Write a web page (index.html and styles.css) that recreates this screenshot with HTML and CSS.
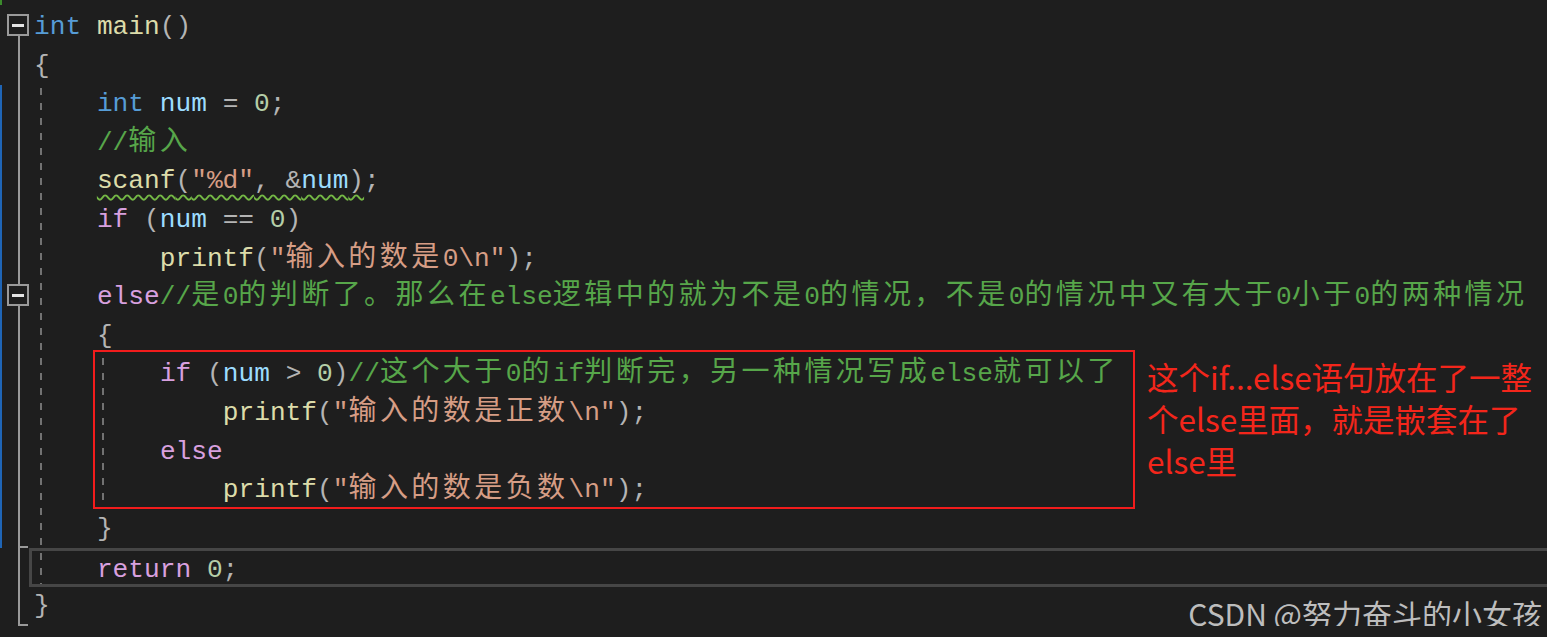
FILE: index.html
```html
<!DOCTYPE html>
<html lang="zh-CN">
<head>
<meta charset="utf-8">
<title>if else 嵌套</title>
<link rel="stylesheet" href="styles.css">
</head>
<body>
<div class="editor">
  <div class="line"><div class="gutter g-first"><div class="fold"></div></div><div class="code"><span class="k">int</span> <span class="f">main</span><span class="p">()</span></div></div>
  <div class="line"><div class="gutter g"></div><div class="code"><span class="p">{</span></div></div>
  <div class="block">
    <div class="line"><div class="gutter g-mod"></div><div class="code">    <span class="k">int</span> <span class="v">num</span> <span class="p">=</span> <span class="n">0</span><span class="p">;</span></div></div>
    <div class="line"><div class="gutter g-mod"></div><div class="code">    <span class="c">//<span class="zh">输入</span></span></div></div>
    <div class="line"><div class="gutter g-mod"></div><div class="code">    <span class="squig"><span class="f">scanf</span><span class="p">(</span><span class="s">"%d"</span><span class="p">, &amp;</span><span class="v">num</span><span class="p">)</span></span><span class="p">;</span></div></div>
    <div class="line"><div class="gutter g-mod"></div><div class="code">    <span class="ctl">if</span> <span class="p">(</span><span class="v">num</span> <span class="p">==</span> <span class="n">0</span><span class="p">)</span></div></div>
    <div class="line"><div class="gutter g-mod"></div><div class="code">        <span class="f">printf</span><span class="p">(</span><span class="s">"<span class="zh">输入的数是</span>0\n"</span><span class="p">);</span></div></div>
    <div class="line"><div class="gutter g-mod"><div class="fold"></div></div><div class="code">    <span class="ctl">else</span><span class="c">//<span class="zh">是</span>0<span class="zh">的判断了。那么在</span>else<span class="zh">逻辑中的就为不是</span>0<span class="zh">的情况，不是</span>0<span class="zh">的情况中又有大于</span>0<span class="zh">小于</span>0<span class="zh">的两种情况</span></span></div></div>
    <div class="line"><div class="gutter g-mod"></div><div class="code">    <span class="p">{</span></div></div>
    <div class="nest">
      <div class="gutter g-mod"></div>
      <div class="box">
        <div class="bline">    <span class="ctl">if</span> <span class="p">(</span><span class="v">num</span> <span class="p">&gt;</span> <span class="n">0</span><span class="p">)</span><span class="c">//<span class="zh">这个大于</span>0<span class="zh">的</span>if<span class="zh">判断完，另一种情况写成</span>else<span class="zh">就可以了</span></span></div>
        <div class="bline">        <span class="f">printf</span><span class="p">(</span><span class="s">"<span class="zh">输入的数是正数</span>\n"</span><span class="p">);</span></div>
        <div class="bline">    <span class="ctl">else</span></div>
        <div class="bline">        <span class="f">printf</span><span class="p">(</span><span class="s">"<span class="zh">输入的数是负数</span>\n"</span><span class="p">);</span></div>
      </div>
      <div class="note">这个if...else语句放在了一整<br>个else里面，就是嵌套在了<br>else里</div>
    </div>
    <div class="line"><div class="gutter g-mod-end"></div><div class="code">    <span class="p">}</span></div></div>
    <div class="line current"><div class="gutter g"></div><div class="code">    <span class="ctl">return</span> <span class="n">0</span><span class="p">;</span></div></div>
  </div>
  <div class="line"><div class="gutter g-end"></div><div class="code code-end"><span class="p">}</span><span class="wm">CSDN @努力奋斗的小女孩</span></div></div>
</div>
</body>
</html>
```

FILE: styles.css
```css
html, body {
  margin: 0;
  padding: 0;
  background: #1e1e1e;
  overflow: hidden;
}

.editor {
  padding-top: 8px;
  font-family: "Liberation Mono", "Noto Sans CJK SC", monospace;
  font-size: 26.2px;
  color: #dcdcdc;
  background: linear-gradient(#3b8a2c, #3b8a2c) 0 0 / 2px 5px no-repeat;
}

.line {
  display: flex;
  height: 38.6px;
  line-height: 38.6px;
}

.gutter {
  width: 29px;
  flex: none;
}

.g {
  background: linear-gradient(#9a9a9a, #9a9a9a) 18px 0 / 2px 100% no-repeat;
}

.g-first {
  background: linear-gradient(#9a9a9a, #9a9a9a) 18px 27px / 2px 100% no-repeat;
}

.g-mod {
  background:
    linear-gradient(#9a9a9a, #9a9a9a) 18px 0 / 2px 100% no-repeat,
    linear-gradient(#1f65b6, #1f65b6) 0 0 / 2px 100% no-repeat;
}

.g-mod-end {
  background:
    linear-gradient(#9a9a9a, #9a9a9a) 18px 100% / 10px 2px no-repeat,
    linear-gradient(#9a9a9a, #9a9a9a) 18px 0 / 2px 100% no-repeat,
    linear-gradient(#1f65b6, #1f65b6) 0 0 / 2px 100% no-repeat;
}

.g-end {
  background:
    linear-gradient(#9a9a9a, #9a9a9a) 18px 100% / 10px 2px no-repeat,
    linear-gradient(#9a9a9a, #9a9a9a) 18px 0 / 2px 100% no-repeat;
}

.fold {
  box-sizing: border-box;
  width: 22px;
  height: 22px;
  margin: 6px 0 0 7px;
  border: 2px solid #9a9a9a;
  background: #1e1e1e;
  display: flex;
  align-items: center;
  justify-content: center;
}

.fold::before {
  content: "";
  width: 12px;
  height: 3px;
  background: #e4e4e4;
}

.code {
  flex: 1;
  padding-left: 5px;
  white-space: pre;
}

.block {
  background: repeating-linear-gradient(to bottom, #727272 0 7px, transparent 7px 15px) 40px 3px / 2px 100% no-repeat;
}

.current .code {
  box-sizing: border-box;
  border: 3px solid #464646;
  border-right: 0;
  padding-left: 2px;
}

.code-end {
  display: flex;
}

.wm {
  margin-left: auto;
  align-self: flex-end;
  padding-right: 5px;
  font-family: "Noto Sans CJK SC", sans-serif;
  font-size: 30px;
  line-height: 26px;
  color: #bdbdbd;
}

.nest {
  display: flex;
  align-items: flex-start;
}

.nest .gutter {
  align-self: stretch;
}

.box {
  width: 1036px;
  height: 152px;
  margin: -5px 0 0.4px 64px;
  border: 2px solid #f21c1c;
  padding: 3px 0 0 2px;
  background: repeating-linear-gradient(to bottom, #727272 0 7px, transparent 7px 15px) 7px 6px / 2px 100% no-repeat;
}

.bline {
  height: 38.6px;
  line-height: 38.6px;
  white-space: pre;
}

.note {
  margin: 0 0 0 12px;
  font-family: "Noto Sans CJK SC", sans-serif;
  font-size: 31.5px;
  line-height: 42px;
  color: #f3261b;
  white-space: nowrap;
}

.zh {
  font-family: "Noto Sans CJK SC", sans-serif;
  font-size: 28px;
  line-height: 20px;
  letter-spacing: 3.44px;
}

.k { color: #569cd6; }
.f { color: #dcdcaa; }
.p { color: #b4b4b4; }
.v { color: #9cdcfe; }
.n { color: #b5cea8; }
.s { color: #d69d85; }
.c { color: #57a64a; }
.ctl { color: #d8a0df; }

.squig {
  text-decoration: underline wavy #74b845;
  text-decoration-thickness: 1.5px;
  text-underline-offset: 6px;
}
```
